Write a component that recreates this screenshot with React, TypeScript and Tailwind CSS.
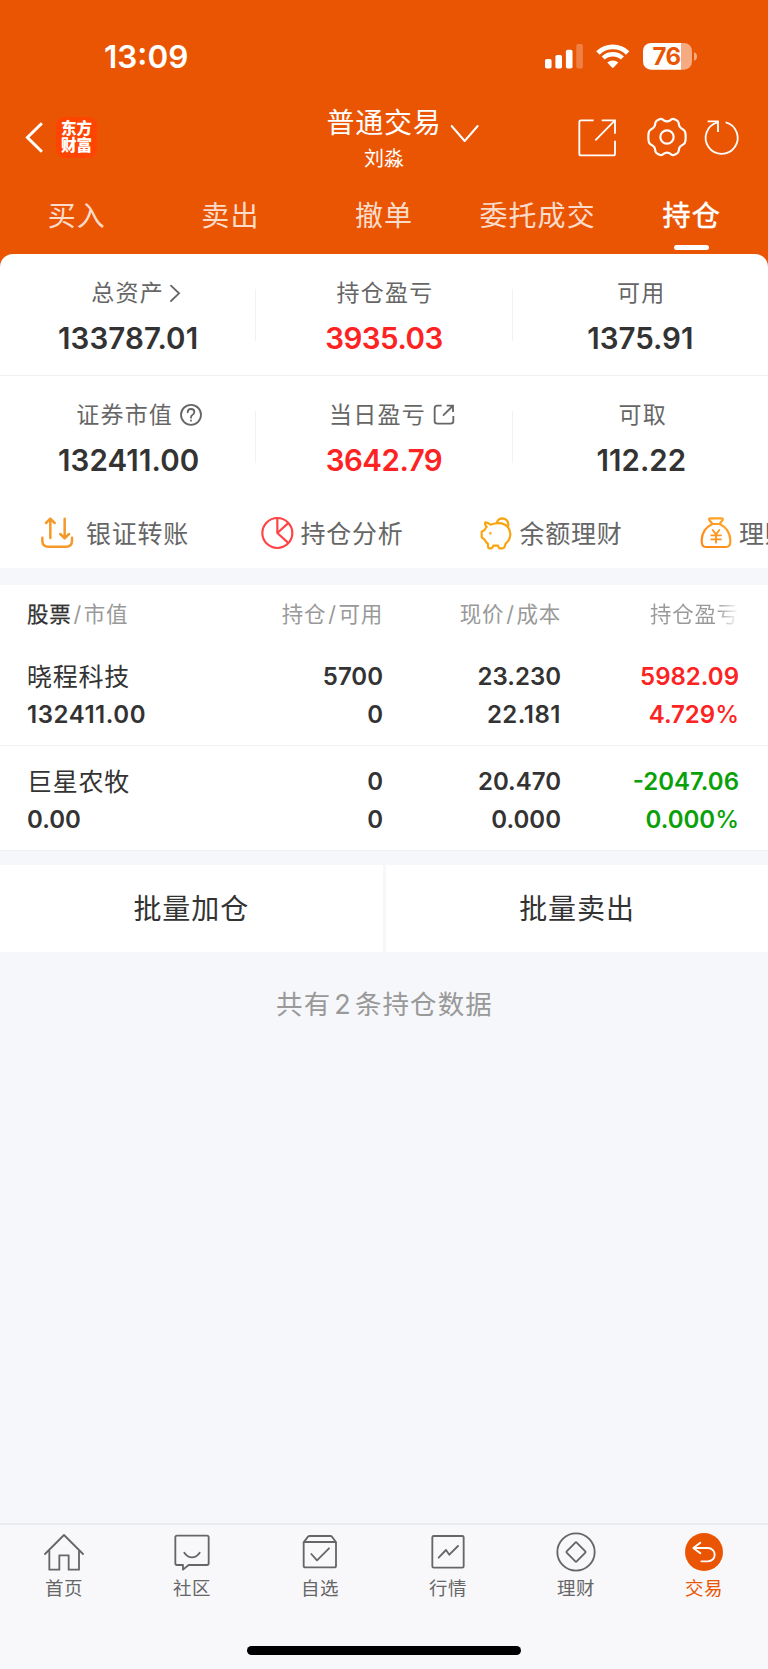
import type { ReactNode } from "react";

type Box = { box: string; className: string; children: ReactNode; stroke?: string; width?: number };

/* Icon artboards use three units per CSS pixel. */
function Icon({ box, className, children, stroke = "currentColor", width = 5.5 }: Box) {
  return (
    <svg
      viewBox={box}
      className={`block shrink-0 ${className}`}
      fill="none"
      stroke={stroke}
      strokeWidth={width}
      strokeLinecap="round"
      strokeLinejoin="round"
    >
      {children}
    </svg>
  );
}

/* One quadrant of the gear outline, mirrored around the centre and smoothed. */
const gearPath = (() => {
  const quadrant: [number, number][] = [
    [6, -47],
    [17, -56],
    [34, -48],
    [37, -30],
    [54, -19],
    [56, -6],
  ];
  const flipped = [...quadrant].reverse();
  const pts: [number, number][] = [
    ...quadrant,
    ...flipped.map(([x, y]): [number, number] => [x, -y]),
    ...quadrant.map(([x, y]): [number, number] => [-x, -y]),
    ...flipped.map(([x, y]): [number, number] => [-x, y]),
  ];
  const near = (a: [number, number], b: [number, number]) => {
    const len = Math.hypot(b[0] - a[0], b[1] - a[1]);
    const k = Math.min(6, len / 2) / len;
    return `${(60 + a[0] + (b[0] - a[0]) * k).toFixed(2)} ${(60 + a[1] + (b[1] - a[1]) * k).toFixed(2)}`;
  };
  let d = "";
  pts.forEach((p, i) => {
    const prev = pts[(i + pts.length - 1) % pts.length];
    const next = pts[(i + 1) % pts.length];
    d += `${i ? "L" : "M"}${near(p, prev)}Q${60 + p[0]} ${60 + p[1]} ${near(p, next)}`;
  });
  return `${d}Z`;
})();

function StatusBar() {
  return (
    <div className="flex h-[97px] items-start pt-[37px]">
      <div className="ml-[104px] w-[90px] text-[31.5px] leading-[40px] font-semibold">13:09</div>
      <svg viewBox="0 0 160 30" className="mt-[5px] ml-[348px] block h-[30px] w-[160px]" fill="white">
        <rect x="3" y="17" width="6.6" height="9.5" rx="1.8" />
        <rect x="13.4" y="13" width="6.6" height="13.5" rx="1.8" />
        <rect x="23.9" y="7.7" width="6.6" height="18.8" rx="1.8" />
        <rect x="34.3" y="2" width="6.6" height="24.5" rx="1.8" opacity=".25" />
        <g fill="none" stroke="white">
          <path d="M55.9 10.9A21.5 21.5 0 0 1 85.7 10.9" strokeWidth="4.9" />
          <path d="M61.2 16A14 14 0 0 1 80.4 16" strokeWidth="4.4" />
        </g>
        <path d="M65.3 20.6A8 8 0 0 1 76.3 20.6L71.6 25.4Q70.8 26.1 70 25.4Z" />
        <path d="M109 1H139V27.7H109A8 8 0 0 1 101 19.7V9A8 8 0 0 1 109 1Z" />
        <path d="M139 1H142A8 8 0 0 1 150 9V19.7A8 8 0 0 1 142 27.7H139Z" opacity=".5" />
        <path d="M152 10.2Q155 11 155 14.4Q155 17.8 152 18.6Z" opacity=".5" />
        <text x="110.5" y="23" fontSize="24" fontWeight="700" fill="#ea5504" textLength="28.5" className="font-[Inter]">
          76
        </text>
      </svg>
    </div>
  );
}

function NavBar() {
  return (
    <div className="grid h-[80px] grid-cols-[256px_256px_256px]">
      <div className="flex items-center pl-[24px]">
        <Icon box="0 0 60 100" className="h-[33px] w-[20px]" width={9}>
          <path d="M54 7L10 50L54 93" strokeLinecap="butt" strokeLinejoin="miter" />
        </Icon>
        <div className="ml-[12px] flex h-[41px] w-[41px] flex-col items-center justify-center rounded-[9px] bg-[#ff4400] text-[15.5px] leading-[17px] font-black">
          <span>东方</span>
          <span>财富</span>
        </div>
      </div>
      <div className="relative flex flex-col items-center pt-[7px]">
        <div className="text-[28px] leading-[38px] tracking-[0.7px]">普通交易</div>
        <div className="mt-[3px] text-[20px] leading-[28px]">刘淼</div>
        <Icon box="195 365 96 72" className="absolute top-[24.500px] left-[193px] h-[24px] w-[32px]" width={6}>
          <path d="M203 377L242 422L281 377" />
        </Icon>
      </div>
      <div className="flex items-center pl-[65.300px]">
        <Icon box="580 350 120 120" className="h-[40px] w-[40px]">
          <path d="M630 360H592Q587 360 587 365V460Q587 465 592 465H689Q694 465 694 460V421" strokeLinecap="butt" />
          <path d="M654 360H694V400M693 361L635 420" strokeLinecap="butt" strokeLinejoin="miter" />
        </Icon>
        <Icon box="0 0 120 120" className="ml-[30.200px] h-[40px] w-[40px]" width={6.5}>
          <path d={gearPath} />
          <circle cx="60" cy="60" r="20" />
        </Icon>
        <Icon box="955 350 120 120" className="ml-[14.800px] h-[40px] w-[40px]">
          <path d="M1026 366A48 48 0 1 1 1002 366" strokeLinecap="butt" />
          <path d="M972 363H1003V395" strokeLinecap="butt" strokeLinejoin="miter" />
        </Icon>
      </div>
    </div>
  );
}

function Tabs() {
  const tabs = ["买入", "卖出", "撤单", "委托成交", "持仓"];
  return (
    <div className="grid h-[77px] grid-cols-5 text-[28px] leading-[40px] tracking-[1.100px]">
      {tabs.map((t) => (
        <div key={t} className="flex flex-col items-center pt-[18.500px]">
          {t === "持仓" ? (
            <>
              <span className="pl-[1px] [-webkit-text-stroke:0.5px_white]">{t}</span>
              <span className="mt-[9.500px] h-[5px] w-[35px] rounded-full bg-white" />
            </>
          ) : (
            <span className="text-[#fbdccb]">{t}</span>
          )}
        </div>
      ))}
    </div>
  );
}

type StatProps = { label: string; value: string; valueClass?: string; pad?: string; icon?: ReactNode };

function Stat({ label, value, valueClass = "text-[#333]", pad = "pl-[2px]", icon }: StatProps) {
  return (
    <div className="flex flex-1 flex-col items-center">
      <div className={`flex h-[32px] items-center text-[23px] leading-[32px] tracking-[1.2px] text-[#666] ${pad}`}>
        <span>{label}</span>
        {icon}
      </div>
      <div className={`mt-[11px] text-[29.500px] leading-[36px] font-semibold ${valueClass}`}>{value}</div>
    </div>
  );
}

const Divider = () => <div className="mt-[12px] h-[52px] w-px bg-[#f2f2f2]" />;

function Summary() {
  return (
    <div className="rounded-t-[13px] bg-white">
      <div className="flex h-[122px] border-b border-[#f2f2f2] pt-[22.500px]">
        <Stat
          label="总资产"
          value="133787.01"
          valueClass="pl-[1px] text-[#333] tracking-[0.1px]"
          pad="pl-[18.500px]"
          icon={
            <Icon box="505 95 42 66" className="ml-[4.500px] h-[22px] w-[14px]" width={5.5}>
              <path d="M514 106L538 129L514 152" strokeLinejoin="miter" />
            </Icon>
          }
        />
        <Divider />
        <Stat label="持仓盈亏" value="3935.03" valueClass="text-[#fd2323] tracking-[-0.5px]" />
        <Divider />
        <Stat label="可用" value="1375.91" />
      </div>
      <div className="flex h-[112px] pt-[23px]">
        <Stat
          label="证券市值"
          value="132411.00"
          valueClass="pl-[2px] text-[#333] tracking-[0.1px]"
          pad="pl-[24px]"
          icon={
            <Icon box="537 460 72 72" className="ml-[6px] h-[24px] w-[24px]">
              <circle cx="573" cy="495.500" r="30" />
              <path d="M563 488Q563 478 573 478Q583 478 583 487Q583 493 577 496Q573 498 573 504" />
              <path d="M573 512V513" />
            </Icon>
          }
        />
        <Divider />
        <Stat
          label="当日盈亏"
          value="3642.79"
          valueClass="text-[#fd2323] tracking-[-0.5px]"
          pad="pl-[17.500px]"
          icon={
            <Icon box="142 460 72 72" className="ml-[6.500px] h-[24px] w-[24px]">
              <path d="M171 468H158Q150 468 150 476V514Q150 522 158 522H198Q206 522 206 514V499" strokeLinecap="butt" />
              <path d="M186 468H205V487M204 469L175 498" strokeLinecap="butt" strokeLinejoin="miter" />
            </Icon>
          }
        />
        <Divider />
        <Stat label="可取" value="112.22" valueClass="pl-[2px] text-[#333]" pad="pl-[5px]" />
      </div>
      <QuickActions />
    </div>
  );
}

function QuickActions() {
  const text = "pt-[1px] text-[25px] leading-[36px] tracking-[0.75px] whitespace-nowrap text-[#666]";
  return (
    <div className="grid h-[80px] grid-cols-[219.500px_219.500px_219.500px_200px] overflow-hidden pt-[27px] pl-[39px]">
      <div className="flex h-[36px] items-center">
        <Icon box="117 75 108 108" className="mr-[11px] h-[36px] w-[36px]" stroke="#f39a2b" width={7.5}>
          <path d="M127 143V152Q127 170 145 170H198Q216 170 216 152V143" />
          <path d="M151 144V86M138 99L151 86L164 99M194 86V144M181 132L194 145L207 132" />
        </Icon>
        <span className={text}>银证转账</span>
      </div>
      <div className="flex h-[36px] items-center">
        <Icon box="776 75 108 108" className="mr-[6px] h-[36px] w-[36px]" stroke="#ff4446" width={6.5}>
          <circle cx="831" cy="129" r="45" />
          <path d="M831 85V129L862 101M831 129L862 157" />
        </Icon>
        <span className={text}>持仓分析</span>
      </div>
      <div className="flex h-[36px] items-center">
        <Icon box="282 75 108 108" className="mr-[5.500px] h-[36px] w-[36px]" stroke="#f9a40d" width={6.5}>
          <path d="M304 97Q313 97 319 104Q336 98 353 100Q377 106 379 131Q379 149 365 161L361 172Q359 175 355 175H347Q343 174 342 167H328Q326 174 322 175H316Q313 175 312 170V162Q306 158 301 148L293 142V125L302 120Q304 114 308 111Q301 103 304 97Z" />
          <path d="M339 96Q344 85 355 85Q374 87 373 107" />
          <circle cx="319" cy="130" r="1.500" strokeWidth="5" />
        </Icon>
        <span className={text}>余额理财</span>
      </div>
      <div className="flex h-[36px] items-center">
        <svg viewBox="939 75 108 108" className="mr-[5.500px] block h-[36px] w-[36px] shrink-0" fill="none" stroke="url(#bag)" strokeWidth="6.5" strokeLinecap="round" strokeLinejoin="round">
          <defs>
            <linearGradient id="bag" gradientUnits="userSpaceOnUse" x1="1035" y1="85" x2="950" y2="172">
              <stop offset="0" stopColor="#ffab2b" />
              <stop offset="1" stopColor="#ff8414" />
            </linearGradient>
          </defs>
          <path d="M982 102L973 90Q971 85 976 85H1010Q1015 85 1013 90L1004 102Z" />
          <path d="M982 102Q951 117 950 151Q949 171 963 171H1023Q1037 171 1036 151Q1035 117 1004 102" />
          <path d="M983 120L993 133L1003 120M993 133V158M979 136H1008M979 148H1008" strokeWidth="5.5" />
        </svg>
        <span className={text}>理财</span>
      </div>
    </div>
  );
}

const cols = "grid grid-cols-[200px_156px_178px_178px] pl-[27px]";

function Pair({ a, b, className = "text-right" }: { a: ReactNode; b: ReactNode; className?: string }) {
  return (
    <div className={`text-[24px] leading-[38px] font-semibold ${className}`}>
      <div className="h-[38px]">{a}</div>
      <div className="h-[38px]">{b}</div>
    </div>
  );
}

function Holdings() {
  const slash = <span className="mx-[2px]">/</span>;
  const name = "text-[25px] font-normal tracking-[0.75px]";
  return (
    <div className="bg-white text-[#333]">
      <div className={`${cols} h-[71px] pt-[11.500px] text-[21.500px] leading-[34px] tracking-[0.7px] text-[#999]`}>
        <div>
          <span className="text-[#333] [-webkit-text-stroke:0.25px_#333]">股票</span>
          {slash}市值
        </div>
        <div className="text-right">持仓{slash}可用</div>
        <div className="text-right">现价{slash}成本</div>
        <div className="ml-auto w-[89px] overflow-hidden bg-[linear-gradient(90deg,#999_75%,#ffffff_100%)] bg-clip-text whitespace-nowrap text-transparent">持仓盈亏</div>
      </div>
      <div className={`${cols} h-[90px] border-b border-[#f2f2f2] pt-[1.500px]`}>
        <Pair className="" a={<span className={name}>晓程科技</span>} b={<span className="tracking-[0.55px]">132411.00</span>} />
        <Pair a="5700" b="0" />
        <Pair a="23.230" b={<span className="tracking-[0.5px]">22.181</span>} />
        <Pair className="text-right text-[#fd2323]" a="5982.09" b={<>4.729<span className="font-medium">%</span></>} />
      </div>
      <div className={`${cols} h-[105px] border-b border-[#eeeff1] pt-[16.500px]`}>
        <Pair className="" a={<span className={name}>巨星农牧</span>} b="0.00" />
        <Pair a="0" b="0" />
        <Pair a="20.470" b="0.000" />
        <Pair className="text-right text-[#09a109]" a="-2047.06" b={<>0.000<span className="font-medium">%</span></>} />
      </div>
    </div>
  );
}

function BottomBar() {
  const items: { label: string; box: string; art: ReactNode }[] = [
    {
      label: "首页",
      box: "133 65 120 120",
      art: <path d="M136 131L193 74L250 131M149 121V178H179V135H207V178H238V121" />,
    },
    {
      label: "社区",
      box: "517 65 120 120",
      art: (
        <>
          <path d="M532 76H622Q627 76 627 81V159Q627 164 622 164H567L550 178V164H532Q527 164 527 159V81Q527 76 532 76Z" />
          <path d="M554 127Q563 141 577 141Q591 141 600 127" />
        </>
      ),
    },
    {
      label: "自选",
      box: "900 65 120 120",
      art: (
        <>
          <path d="M911 96L924 79Q926 77 929 77H991Q994 77 996 79L1008 96V166Q1008 171 1003 171H916Q911 171 911 166ZM911 95H1008" />
          <path d="M934 131L951 150L987 114" />
        </>
      ),
    },
    {
      label: "行情",
      box: "132 65 120 120",
      art: (
        <>
          <rect x="145" y="77" width="94" height="95" rx="4" />
          <path d="M164 142L186 119L196 133L222 107" />
        </>
      ),
    },
    {
      label: "理财",
      box: "516 65 120 120",
      art: (
        <>
          <circle cx="576" cy="125" r="56" />
          <path d="M574 97Q576 95 578 97L604 123Q606 125 604 127L578 153Q576 155 574 153L548 127Q546 125 548 123Z" />
        </>
      ),
    },
    {
      label: "交易",
      box: "900 65 120 120",
      art: (
        <>
          <circle cx="960" cy="125" r="57" fill="#ea5504" stroke="none" />
          <path d="M949 97L928 113L949 129M930 113H971C999 113 999 153 971 153H952" stroke="#fff" />
        </>
      ),
    },
  ];
  return (
    <div className="h-[146px] border-t-2 border-[#e9ebf0] bg-[#f8f8fb]">
      <div className="grid h-[120px] grid-cols-6 pt-[7px]">
        {items.map((it) => (
          <div key={it.label} className={`flex flex-col items-center ${it.label === "交易" ? "text-[#ea5504]" : "text-[#666]"}`}>
            <Icon box={it.box} className="h-[40px] w-[40px]">
              {it.art}
            </Icon>
            <span className="mt-[2px] text-[18.500px] leading-[28px] tracking-[0.6px]">{it.label}</span>
          </div>
        ))}
      </div>
      <div className="mx-auto mt-[0.500px] h-[9px] w-[274px] rounded-full bg-black" />
    </div>
  );
}

export default function App() {
  return (
    <div className="flex h-[1669px] w-[768px] flex-col overflow-hidden bg-[#f6f7fa] font-[Inter,'Noto_Sans_CJK_SC',sans-serif]">
      <div className="bg-[#ea5504] text-white">
        <StatusBar />
        <NavBar />
        <Tabs />
        <Summary />
      </div>
      <div className="mt-[17px]">
        <Holdings />
      </div>
      <div className="mt-[14px] grid h-[87px] grid-cols-[382.500px_382px] gap-[3.500px] text-center text-[28px] leading-[85px] tracking-[0.9px] text-[#333]">
        <div className="bg-white pt-[2px]">批量加仓</div>
        <div className="bg-white pt-[2px]">批量卖出</div>
      </div>
      <div className="mt-[32px] pl-[1px] text-center text-[26.500px] leading-[40px] tracking-[1.1px] text-[#999]">
        共有<span className="mx-[3px] text-[27px]">2</span>条持仓数据
      </div>
      <div className="mt-auto">
        <BottomBar />
      </div>
    </div>
  );
}
